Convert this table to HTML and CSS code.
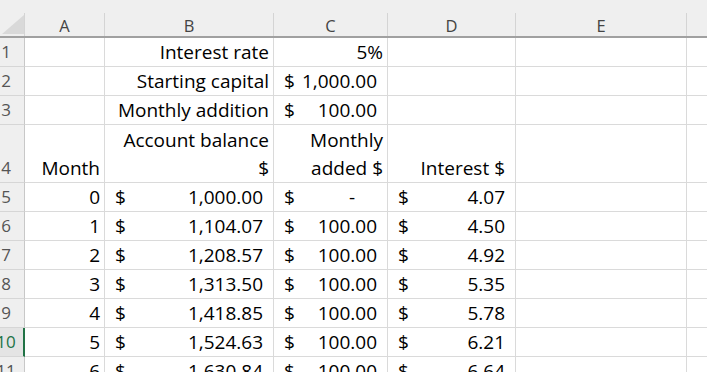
FILE: index.html
```html
<!DOCTYPE html>
<html>
<head>
<meta charset="utf-8">
<link rel="stylesheet" href="styles.css">
</head>
<body>
<div class="sheet">
  <div class="hd"><div class="lbl corner"><svg class="tri" width="22" height="19" viewBox="0 0 22 19"><polygon points="22,0 22,19 0,19" fill="#d9d9d9"/></svg></div></div>
  <div class="hd"><div class="lbl">A</div></div>
  <div class="hd"><div class="lbl">B</div></div>
  <div class="hd"><div class="lbl">C</div></div>
  <div class="hd"><div class="lbl">D</div></div>
  <div class="hd"><div class="lbl">E</div></div>
  <div class="hd"><div class="lbl"></div></div>

  <div class="rh">1</div>
  <div class="c"></div>
  <div class="c r">Interest rate</div>
  <div class="c r">5%</div>
  <div class="c"></div><div class="c"></div><div class="c"></div>

  <div class="rh">2</div>
  <div class="c"></div>
  <div class="c r">Starting capital</div>
  <div class="c acc"><span>$</span><span>1,000.00</span></div>
  <div class="c"></div><div class="c"></div><div class="c"></div>

  <div class="rh">3</div>
  <div class="c"></div>
  <div class="c r">Monthly addition</div>
  <div class="c acc"><span>$</span><span>100.00</span></div>
  <div class="c"></div><div class="c"></div><div class="c"></div>

  <div class="rh">4</div>
  <div class="c r">Month</div>
  <div class="c r"><div class="ml">Account balance<br>$</div></div>
  <div class="c r"><div class="ml">Monthly<br>added $</div></div>
  <div class="c r wide">Interest $</div>
  <div class="c"></div><div class="c"></div>

  <div class="rh">5</div>
  <div class="c r">0</div>
  <div class="c acc"><span>$</span><span>1,000.00</span></div>
  <div class="c acc"><span>$</span><span class="dash">-</span></div>
  <div class="c acc"><span>$</span><span>4.07</span></div>
  <div class="c"></div><div class="c"></div>

  <div class="rh">6</div>
  <div class="c r">1</div>
  <div class="c acc"><span>$</span><span>1,104.07</span></div>
  <div class="c acc"><span>$</span><span>100.00</span></div>
  <div class="c acc"><span>$</span><span>4.50</span></div>
  <div class="c"></div><div class="c"></div>

  <div class="rh">7</div>
  <div class="c r">2</div>
  <div class="c acc"><span>$</span><span>1,208.57</span></div>
  <div class="c acc"><span>$</span><span>100.00</span></div>
  <div class="c acc"><span>$</span><span>4.92</span></div>
  <div class="c"></div><div class="c"></div>

  <div class="rh">8</div>
  <div class="c r">3</div>
  <div class="c acc"><span>$</span><span>1,313.50</span></div>
  <div class="c acc"><span>$</span><span>100.00</span></div>
  <div class="c acc"><span>$</span><span>5.35</span></div>
  <div class="c"></div><div class="c"></div>

  <div class="rh">9</div>
  <div class="c r">4</div>
  <div class="c acc"><span>$</span><span>1,418.85</span></div>
  <div class="c acc"><span>$</span><span>100.00</span></div>
  <div class="c acc"><span>$</span><span>5.78</span></div>
  <div class="c"></div><div class="c"></div>

  <div class="rh sel">10</div>
  <div class="c r">5</div>
  <div class="c acc"><span>$</span><span>1,524.63</span></div>
  <div class="c acc"><span>$</span><span>100.00</span></div>
  <div class="c acc"><span>$</span><span>6.21</span></div>
  <div class="c"></div><div class="c"></div>

  <div class="rh">11</div>
  <div class="c r">6</div>
  <div class="c acc"><span>$</span><span>1,630.84</span></div>
  <div class="c acc"><span>$</span><span>100.00</span></div>
  <div class="c acc"><span>$</span><span>6.64</span></div>
  <div class="c"></div><div class="c"></div>
</div>
</body>
</html>
```

FILE: styles.css
```css
html, body {
  margin: 0;
  padding: 0;
  background: #ffffff;
  overflow: hidden;
}

.sheet {
  display: grid;
  grid-template-columns: 25px 80px 169px 114px 128px 171px 60px;
  grid-template-rows: 38px repeat(3, 29px) 58px repeat(7, 29px);
  width: 747px;
}

.hd {
  background: #efefef;
  border-bottom: 2px solid #a0a0a0;
  padding-top: 13px;
  display: flex;
  box-sizing: border-box;
}

.lbl {
  flex: 1;
  border-right: 1px solid #d4d4d4;
  display: flex;
  justify-content: center;
  align-items: flex-end;
  font-family: "Open Sans", sans-serif;
  font-size: 16.5px;
  line-height: 20px;
  color: #444444;
}

.lbl.corner {
  justify-content: flex-end;
}

.tri {
  display: block;
  margin: 0 0 2px 0;
}

.rh {
  background: #efefef;
  border-right: 1px solid #c8c8c8;
  border-bottom: 1px solid #d6d6d6;
  box-sizing: border-box;
  display: flex;
  justify-content: center;
  align-items: flex-end;
  padding-right: 12px;
  font-family: "Open Sans", sans-serif;
  font-size: 17px;
  line-height: 28px;
  color: #555555;
  white-space: nowrap;
}

.rh.sel {
  color: #217346;
  background: #e4e4e4;
  border-right: 2px solid #217346;
  padding-right: 11px;
}

.c {
  border-right: 1px solid #dadada;
  border-bottom: 1px solid #dadada;
  box-sizing: border-box;
  display: flex;
  align-items: flex-end;
  padding: 0 4px;
  font-family: "Open Sans", sans-serif;
  font-size: 19px;
  line-height: 28px;
  color: #000000;
  white-space: nowrap;
  overflow: hidden;
}

.r {
  justify-content: flex-end;
}

.ml {
  text-align: right;
}

.wide {
  padding-right: 10px;
}

.acc {
  justify-content: space-between;
  padding: 0 10px 0 10px;
}

.dash {
  padding-right: 22px;
}
```
